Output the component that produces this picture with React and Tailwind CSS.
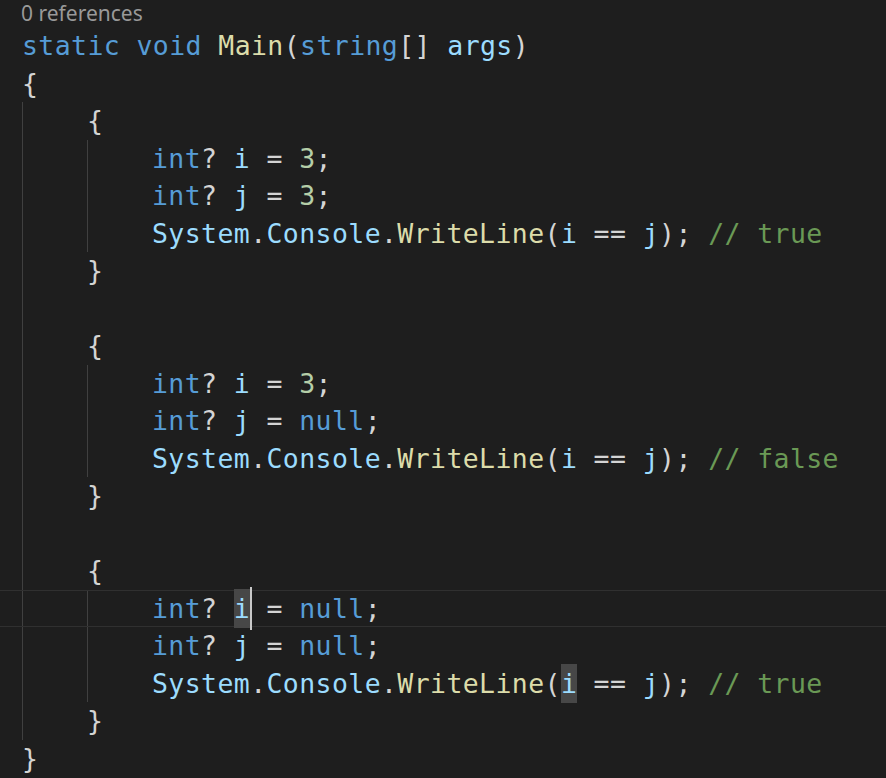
import React from "react";

const C = {
  kw: "text-[#569cd6]",
  fn: "text-[#dcdcaa]",
  id: "text-[#9cdcfe]",
  num: "text-[#b5cea8]",
  p: "text-[#d4d4d4]",
  cm: "text-[#6a9955]",
};

const T = ({ c, children }) => <span className={c}>{children}</span>;

const Guide = () => <span className="w-[65px] shrink-0 h-full border-l border-[#404040]" />;
const Space = () => <span className="w-[65px] shrink-0 h-full" />;

const Row = ({ guides = [], current, children }) => (
  <div
    className={
      "relative flex items-center h-[37.5px] pl-[22px] whitespace-pre " +
      (current ? "border-y border-[#303030]" : "")
    }
  >
    {guides.map((g, i) => (g ? <Guide key={i} /> : <Space key={i} />))}
    <span className="leading-[37.5px]">{children}</span>
  </div>
);

const Decl = ({ name, value, sel }) => (
  <>
    <T c={C.kw}>int</T>
    <T c={C.p}>? </T>
    {sel ? (
      <span className="relative bg-[#474747] text-[#9cdcfe] py-[4px]">
        {name}
        <span className="absolute right-[-2px] top-[-2px] bottom-[-2px] w-[2px] bg-[#c8c8c8]" />
      </span>
    ) : (
      <T c={C.id}>{name}</T>
    )}
    <T c={C.p}> = </T>
    {value === "null" ? <T c={C.kw}>null</T> : <T c={C.num}>{value}</T>}
    <T c={C.p}>;</T>
  </>
);

const Write = ({ result, sel }) => (
  <>
    <T c={C.id}>System</T>
    <T c={C.p}>.</T>
    <T c={C.id}>Console</T>
    <T c={C.p}>.</T>
    <T c={C.fn}>WriteLine</T>
    <T c={C.p}>(</T>
    {sel ? <span className="bg-[#474747] text-[#9cdcfe] py-[4px]">i</span> : <T c={C.id}>i</T>}
    <T c={C.p}> == </T>
    <T c={C.id}>j</T>
    <T c={C.p}>); </T>
    <T c={C.cm}>// {result}</T>
  </>
);

const Block = ({ a, b, result, last }) => (
  <>
    <Row guides={[1]}><T c={C.p}>{"{"}</T></Row>
    <Row guides={[1, 1]} current={last}><Decl name="i" value={a} sel={last} /></Row>
    <Row guides={[1, 1]}><Decl name="j" value={b} /></Row>
    <Row guides={[1, 1]}><Write result={result} sel={last} /></Row>
    <Row guides={[1]}><T c={C.p}>{"}"}</T></Row>
  </>
);

export default function App() {
  return (
    <div className="w-[886px] h-[778px] overflow-hidden bg-[#1e1e1e]">
      <div className="h-[27px] pl-[21px] flex items-center text-[21px] text-[#999999] font-['Noto_Sans',sans-serif]">
        0 references
      </div>
      <div className="font-['DejaVu_Sans_Mono',monospace] text-[26.5px] tracking-[0.4px]">
        <Row>
          <T c={C.kw}>static</T> <T c={C.kw}>void</T> <T c={C.fn}>Main</T>
          <T c={C.p}>(</T>
          <T c={C.kw}>string</T>
          <T c={C.p}>[] </T>
          <T c={C.id}>args</T>
          <T c={C.p}>)</T>
        </Row>
        <Row><T c={C.p}>{"{"}</T></Row>
        <Block a="3" b="3" result="true" />
        <Row guides={[1]} />
        <Block a="3" b="null" result="false" />
        <Row guides={[1]} />
        <Block a="null" b="null" result="true" last />
        <Row><T c={C.p}>{"}"}</T></Row>
      </div>
    </div>
  );
}
